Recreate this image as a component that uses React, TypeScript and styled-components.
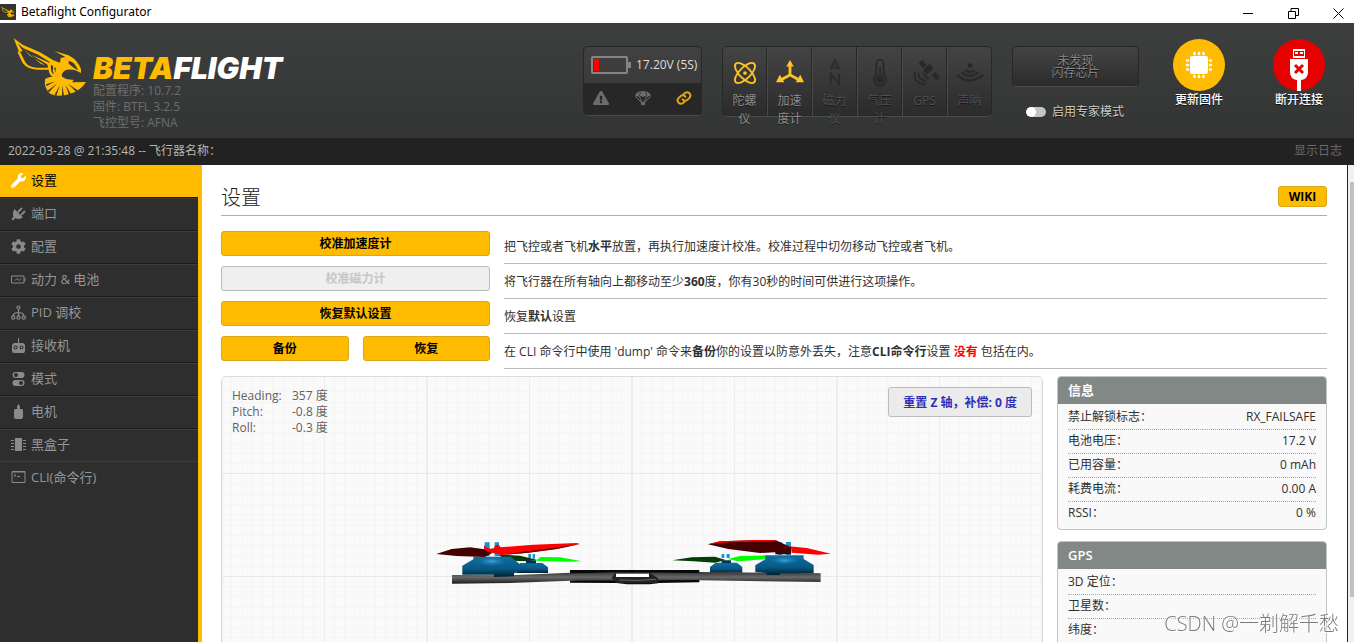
import React from "react";
import styled, { createGlobalStyle } from "styled-components";
import { FaWrench, FaCog, FaExclamationTriangle } from "react-icons/fa";

const YELLOW = "#ffbb00";
const FONT = '"Open Sans", "Noto Sans CJK SC", sans-serif';

const GlobalStyle = createGlobalStyle`
  * { box-sizing: border-box; }
  body { margin: 0; font-family: ${FONT}; font-size: 12px; color: #303030; background: #fff; }
  button, input { font-family: inherit; font-size: inherit; margin: 0; }
  h1, h2, p, dl, dd, ul { margin: 0; padding: 0; }
  svg { display: block; flex: none; }
`;

const Shell = styled.div`
  display: flex;
  flex-direction: column;
  height: 100vh;
  overflow: hidden;
`;

/* ---------- window title bar ---------- */
const TitleBar = styled.div`
  display: flex;
  align-items: center;
  flex: none;
  height: 23px;
  background: #fff;
  color: #000;
`;
const TitleText = styled.span`
  margin-left: 5px;
  font: 12px/23px "Noto Sans", "Open Sans", sans-serif;
`;
const WindowButtons = styled.div`
  display: flex;
  gap: 14px;
  margin-left: auto;
`;
const WindowButton = styled.button`
  display: flex;
  align-items: flex-end;
  justify-content: center;
  width: 31px;
  height: 23px;
  padding: 0 0 4px;
  border: 0;
  background: none;
`;

/* ---------- header ---------- */
const Header = styled.header`
  display: flex;
  flex: none;
  height: 115px;
  padding-right: 5px;
  background: linear-gradient(#3d3f3e, #333534);
`;
const Brand = styled.div`
  display: flex;
  padding: 14px 0 0 12px;
`;
const BrandText = styled.div`
  padding: 16px 0 0 6px;
`;
const BrandName = styled.div`
  font: italic 900 30px/30px Inter, sans-serif;
  color: #fff;
  white-space: nowrap;
  b { font-weight: 900; color: ${YELLOW}; }
`;
const BrandInfo = styled.div`
  line-height: 16px;
  color: #6d6f6e;
`;

const HeaderTools = styled.div`
  display: flex;
  gap: 20px;
  margin-left: auto;
  padding-top: 23px;
`;
const raised = `
  border: 1px solid #272727;
  border-bottom-color: #4a4c4b;
  border-radius: 5px;
  background: linear-gradient(#434443, #2b2b2b);
`;
const BatteryBox = styled.div`
  ${raised}
  width: 119px;
  height: 70px;
  background: linear-gradient(#404140, #343434);
  overflow: hidden;
`;
const BatteryTop = styled.div`
  display: flex;
  align-items: center;
  gap: 5px;
  height: 36px;
  padding-left: 7px;
  color: #ddd;
  line-height: 16px;
  white-space: nowrap;
`;
const BatteryBottom = styled.div`
  display: flex;
  align-items: center;
  justify-content: space-between;
  height: 32px;
  padding: 0 9px 2px;
  background: #272727;
  color: #6c6c6c;
`;
const Sensors = styled.ul`
  ${raised}
  display: flex;
  width: 270px;
  height: 71px;
  list-style: none;
`;
const Sensor = styled.li<{ $on?: boolean }>`
  flex: 1;
  padding: 12px 5px 0;
  border-right: 1px solid #272727;
  border-left: 1px solid #4a4a4a;
  color: ${(p) => (p.$on ? "#ffc425" : "#292929")};
  &:first-child { border-left: 0; }
  &:last-child { border-right: 0; }
  svg { margin: 0 auto; }
`;
const SensorLabel = styled.div<{ $on?: boolean }>`
  width: 32px;
  margin: 5px auto 0;
  text-align: center;
  line-height: 18px;
  color: ${(p) => (p.$on ? "#8e8e8e" : "#4f4f4f")};
  text-shadow: 0 1px #161616;
`;
const FlashColumn = styled.div`
  width: 127px;
`;
const FlashBox = styled.div`
  ${raised}
  height: 41px;
  padding-top: 8px;
  text-align: center;
  line-height: 12px;
  color: #858585;
  text-shadow: 0 1px #111;
`;
const ExpertToggle = styled.label`
  display: flex;
  align-items: center;
  gap: 6px;
  margin: 16px 0 0 14px;
  line-height: 18px;
  color: #ccc;
  text-shadow: 0 1px #111;
  white-space: nowrap;
`;
const Switch = styled.input`
  appearance: none;
  width: 20px;
  height: 10px;
  border-radius: 5px;
  background: radial-gradient(circle at 5px 5px, #fff 5px, #c4c4c4 5px);
`;
const Actions = styled.div`
  display: flex;
  margin: -7px 0 0 -10px;
`;
const Action = styled.button`
  display: flex;
  flex-direction: column;
  align-items: center;
  justify-content: flex-start;
  width: 100px;
  padding: 0;
  border: 0;
  background: none;
  color: #fff;
  line-height: 18px;
  text-shadow: 0 1px #111;
  font-weight: 500;
`;

/* ---------- status bar ---------- */
const StatusBar = styled.div`
  display: flex;
  justify-content: space-between;
  align-items: flex-start;
  flex: none;
  height: 27px;
  padding: 0 12px 0 8px;
  background: #222;
  color: #b5b5b5;
  line-height: 25px;
`;
const LogButton = styled.button`
  padding: 0;
  border: 0;
  background: none;
  color: #686868;
  line-height: 25px;
`;

/* ---------- body ---------- */
const Body = styled.div`
  display: flex;
  flex: 1;
  min-height: 0;
`;
const Nav = styled.nav`
  flex: none;
  width: 202px;
  border-right: 4px solid ${YELLOW};
  background: #2e2e2e;
`;
const NavItem = styled.a<{ $active?: boolean }>`
  display: flex;
  align-items: center;
  gap: 5px;
  height: 33px;
  padding: 0 0 2px 11px;
  border-top: 1px solid #1c1c1c;
  box-shadow: inset 0 1px #3d3d3d;
  color: #969696;
  font-size: 13px;
  line-height: 18px;
  text-decoration: none;
  svg { color: #8a8a8a; }
  &:last-child {
    height: 32px;
    border-top-color: #3d3d3d;
    box-shadow: none;
  }
  ${(p) =>
    p.$active &&
    `
    height: 32px;
    margin-right: -4px;
    padding-bottom: 3px;
    border-color: ${YELLOW};
    box-shadow: none;
    background: ${YELLOW};
    color: #000;
    svg { color: #fff; }
  `}
`;
const Main = styled.main`
  flex: 1;
  min-width: 0;
  padding: 0 20px 0 19px;
  overflow: hidden;
`;
const ScrollBar = styled.div`
  flex: none;
  width: 7px;
  padding: 17px 0 45px 2px;
  border-left: 1px solid #222;
  background: #f1f1f1;
`;
const ScrollThumb = styled.div`
  height: 100%;
  background: #c1c1c1;
`;
const PageHead = styled.div`
  display: flex;
  align-items: flex-start;
  justify-content: space-between;
  height: 51px;
  padding-top: 21px;
  border-bottom: 1px solid #e8b020;
`;
const PageTitle = styled.h1`
  color: #222;
  font-size: 20px;
  font-weight: 300;
  line-height: 24px;
`;
const Button = styled.button`
  flex: 1;
  height: 25px;
  padding: 0;
  border: 1px solid #dba718;
  border-radius: 3px;
  background: ${YELLOW};
  color: #000;
  font-weight: 700;
  line-height: 20px;
  &:disabled {
    border-color: #bbb;
    background: #efefef;
    color: #c6c6c6;
  }
`;
const WikiButton = styled(Button)`
  flex: none;
  width: 49px;
  height: 21px;
  padding-top: 1px;
  line-height: 18px;
`;
const ActionRows = styled.div`
  padding-top: 13px;
`;
const ActionRow = styled.div`
  display: flex;
  gap: 14px;
  height: 35px;
`;
const ActionButtons = styled.div`
  display: flex;
  flex: none;
  gap: 14px;
  width: 269px;
  padding-top: 2px;
`;
const ActionText = styled.p`
  flex: 1;
  padding-top: 2px;
  border-bottom: 1px solid #bbb;
  line-height: 32px;
  white-space: nowrap;
  b { font-weight: 700; }
`;
const Warn = styled.b`
  color: #f00;
`;
const Columns = styled.div`
  display: flex;
  gap: 14px;
  margin-top: 7px;
`;
const ModelPanel = styled.section`
  position: relative;
  display: flex;
  justify-content: space-between;
  align-items: flex-start;
  flex: 1;
  height: 420px;
  padding: 10px;
  border: 1px solid #ddd;
  border-radius: 5px;
  background: #fafafa;
  overflow: hidden;
`;
const Scene = styled.svg`
  position: absolute;
  inset: 0;
  width: 100%;
  height: 100%;
`;
const Attitude = styled.dl`
  position: relative;
  display: grid;
  grid-template-columns: 60px auto;
  padding-top: 1px;
  line-height: 16px;
  color: #616161;
`;
const ResetButton = styled.button`
  position: relative;
  height: 30px;
  padding: 0 14px;
  border: 1px solid #bbb;
  border-radius: 3px;
  background: #ebebeb;
  color: #2f2fbb;
  font-weight: 700;
`;
const SideColumn = styled.div`
  display: flex;
  flex: none;
  flex-direction: column;
  gap: 11px;
  width: 270px;
`;
const Panel = styled.section`
  border: 1px solid #c4c4c4;
  border-radius: 4px;
  background: #f9f9f9;
  overflow: hidden;
`;
const PanelTitle = styled.h2`
  height: 27px;
  padding-left: 10px;
  background: #828885;
  color: #fff;
  font-size: 13px;
  font-weight: 600;
  line-height: 27px;
`;
const PanelTable = styled.table`
  width: calc(100% - 20px);
  margin: 1px 10px 4px;
  border-collapse: collapse;
  line-height: 21px;
  tr { height: 24px; border-bottom: 1px dotted #aaa; }
  tr:last-child { border-bottom: 0; }
  th, td { padding: 0 0 1px; font-weight: 400; text-align: left; }
  td { text-align: right; }
`;
const Watermark = styled.div`
  position: fixed;
  right: 15px;
  bottom: 3px;
  color: rgba(110, 110, 110, 0.9);
  font-size: 20px;
  font-weight: 300;
  line-height: 30px;
  text-shadow: 0 0 2px #fff, 1px 1px #fff;
  white-space: nowrap;
`;

/* ---------- drawings ---------- */
const Bee = ({ width, height }: { width: number; height: number }) => (
  <svg width={width} height={height} viewBox="36 110 225 183" fill={YELLOW}>
    <path d="M41 114 L68 133 L120 156 L160 180 L180 187 L182 173 L196 170 L163 152 L205 165 Q232 177 243 207 L243 218 L225 209 Q206 205 196 210 Q183 218 186 229 Q202 241 222 238 L216 246 L258 245 Q243 270 211 280 Q178 292 151 281 Q131 264 135 237 Q143 229 158 229 Q146 222 146 208 L112 208 Q82 207 68 188 L52 154 L57 154 Z" />
    <path
      d="M53 129 L70 144 L116 164 L148 184 L150 188 L94 163 L141 192 Q146 197 143 202 L112 202 Q87 202 76 186 L60 154 L68 152 Z M206 182 Q220 184 226 195 L235 210 L222 203 L206 190 Z M153 193 Q164 198 158 210 L162 222 Q150 216 153 193 Z M163 202 L168 202 L166 218 Z"
      fill="#393b3a"
    />
    <path
      d="M138 252 L166 243 L140 257 Z M143 271 L172 249 L147 276 Z M163 285 L180 254 L169 286 Z M186 287 L187 255 L192 286 Z M207 283 L196 253 L213 281 Z M228 274 L204 250 L233 270 Z"
      fill="#393b3a"
    />
    <path d="M70 147 L122 190 L136 195 L90 166 Z" fill={YELLOW} />
  </svg>
);

const BatteryIcon = () => (
  <svg width="40" height="18" fill="none">
    <rect x="1" y="1" width="35" height="16" rx="1" stroke="#858585" strokeWidth="2" />
    <rect x="37" y="6" width="3" height="6" fill="#858585" />
    <rect x="3" y="3" width="5" height="12" fill="#f00" />
  </svg>
);
const Parachute = () => (
  <svg width="16" height="16" viewBox="0 0 16 16" fill="currentColor">
    <path d="M0 7 Q0 1.500 8 1 Q16 1.500 16 7 L14 6 L12 7 L10 6 L8 7 L6 6 L4 7 L2 6 Z" />
    <path d="M1 7 L7 13 M4.500 7 L7.500 13 M11.500 7 L8.500 13 M15 7 L9 13" fill="none" stroke="currentColor" />
    <path d="M6 12 H10 V15 H6 Z" />
    <path d="M4.500 6 Q4.500 3.500 6 2 M11.500 6 Q11.500 3.500 10 2" fill="none" stroke="#272727" strokeWidth=".8" />
  </svg>
);
const LinkIcon = () => (
  <svg width="16" height="16" viewBox="0 0 24 24" fill="none" stroke="#e0a50f" strokeWidth="3" strokeLinecap="round">
    <path d="M10 14a5 5 0 0 0 7.500.500l3-3a5 5 0 0 0-7-7l-2 1.700" />
    <path d="M14 10a5 5 0 0 0-7.500-.500l-3 3a5 5 0 0 0 7 7l2-1.700" />
  </svg>
);

const sensorArt: Record<string, React.ReactNode> = {
  gyro: (
    <g fill="none" stroke="currentColor" strokeWidth="2">
      <ellipse cx="15" cy="15" rx="14" ry="6" transform="rotate(45 15 15)" />
      <ellipse cx="15" cy="15" rx="14" ry="6" transform="rotate(-45 15 15)" />
      <circle cx="15" cy="15" r="2" fill="currentColor" stroke="none" />
    </g>
  ),
  accel: (
    <g fill="currentColor">
      <path d="M15 6 V17 L6 22 M15 17 L24 22" fill="none" stroke="currentColor" strokeWidth="3" />
      <path d="M15 1 L19 8 H11 Z M0 25 L4 17 L9 25 Z M30 25 L26 17 L21 25 Z" />
    </g>
  ),
  mag: (
    <g fill="#333" stroke="#2b2b2b">
      <path d="M15 0 L20 10 H10 Z" />
      <path d="M10.500 27 V16 L19.500 27 V16" fill="none" strokeWidth="2" />
    </g>
  ),
  baro: (
    <g fill="none" stroke="currentColor" strokeWidth="2">
      <path d="M11 17 V5 a4 4 0 0 1 8 0 V17 a6.500 6.500 0 1 1 -8 0 Z" />
      <path d="M15 8 V20" />
      <circle cx="15" cy="22" r="3.500" fill="currentColor" />
    </g>
  ),
  gps: (
    <g fill="currentColor">
      <path d="M8 4 L12 1 L17 7 L13 10 Z M22 17 L26 14 L31 20 L27 23 Z M13 12 L20 5 L24 10 L17 17 Z" />
      <path d="M12 14 L20 21 Q14 22 12 14 Z" />
      <path d="M8 15 Q8 23 16 23 M4 14 Q3 27 16 27" fill="none" stroke="currentColor" strokeWidth="2" />
    </g>
  ),
  sonar: (
    <g fill="none" stroke="currentColor" strokeWidth="2.500">
      <circle cx="15" cy="7" r="2.500" fill="currentColor" stroke="none" />
      <path d="M10 12 Q15 16 20 12 M6 14 Q15 22 24 14 M1 17 Q15 29 29 17" />
    </g>
  ),
};
const sensors = [
  { id: "gyro", label: "陀螺仪", on: true },
  { id: "accel", label: "加速度计", on: true },
  { id: "mag", label: "磁力仪" },
  { id: "baro", label: "气压计" },
  { id: "gps", label: "GPS" },
  { id: "sonar", label: "声呐" },
];

const FirmwareIcon = () => (
  <svg width="52" height="52">
    <circle cx="26" cy="26" r="26" fill={YELLOW} />
    <rect x="17" y="17" width="18" height="18" rx="2" fill="#fff" />
    <path
      d="M21.500 14 v1 M26 14 v1 M30.500 14 v1 M21.500 37 v1 M26 37 v1 M30.500 37 v1 M14 21.500 h1 M14 26 h1 M14 30.500 h1 M37 21.500 h1 M37 26 h1 M37 30.500 h1"
      stroke="#fff"
      strokeWidth="2.500"
      strokeLinecap="round"
    />
  </svg>
);
const DisconnectIcon = () => (
  <svg width="52" height="52">
    <circle cx="26" cy="26" r="26" fill="#e60000" />
    <path d="M20 10 H32 V19 H20 Z M17 20 H35 V33 Q35 40 28 41 V52 H24 V41 Q17 40 17 33 Z" fill="#fff" />
    <path d="M21 12 H31 V17 H21 Z" fill="#e60000" />
    <path d="M22 13 H25 V15 H22 Z M27 13 H30 V15 H27 Z" fill="#fff" />
    <path d="M22 26 L30 34 M30 26 L22 34" stroke="#e60000" strokeWidth="3" />
  </svg>
);

const Glyph = ({ children }: { children: React.ReactNode }) => (
  <svg width="15" height="15" viewBox="0 0 15 15" fill="currentColor">
    {children}
  </svg>
);
const navItems = [
  { label: "设置", icon: <FaWrench size={15} />, active: true },
  {
    label: "端口",
    icon: (
      <Glyph>
        <path d="M3.500 3 L12 11.500 Q8 14 4.500 12 L2 14.500 L.5 13 L2.500 11 Q1 7 3.500 3 Z" />
        <path d="M7 6 L11 2 M10 9 L14 5" stroke="currentColor" strokeWidth="1.800" />
      </Glyph>
    ),
  },
  { label: "配置", icon: <FaCog size={15} /> },
  {
    label: "动力 & 电池",
    icon: (
      <Glyph>
        <path d="M.5 4 H13 V11 H.5 Z M14 6 V9 M4 8.500 L6 6.500 L8 8.500 L10 6.500" fill="none" stroke="currentColor" />
      </Glyph>
    ),
  },
  {
    label: "PID 调校",
    icon: (
      <Glyph>
        <g fill="none" stroke="currentColor" strokeWidth="1.200">
          <circle cx="7.500" cy="2.500" r="1.500" />
          <circle cx="2.200" cy="12.500" r="1.600" />
          <circle cx="7.500" cy="12.500" r="1.600" />
          <circle cx="12.800" cy="12.500" r="1.600" />
          <path d="M7.500 4 V11 M2.200 11 Q2.200 7.500 7.500 7.500 Q12.800 7.500 12.800 11" />
        </g>
      </Glyph>
    ),
  },
  {
    label: "接收机",
    icon: (
      <Glyph>
        <path
          fillRule="evenodd"
          d="M7 0 H8 V5 H12 L14 7 V13 Q14 15 12 15 H3 Q1 15 1 13 V7 L3 5 H7 Z M4.500 7.500 a2 2 0 1 0 .01 0 Z M10.500 7.500 a2 2 0 1 0 .01 0 Z"
        />
        <circle cx="4.500" cy="9.500" r="1" />
        <circle cx="10.500" cy="9.500" r="1" />
      </Glyph>
    ),
  },
  {
    label: "模式",
    icon: (
      <Glyph>
        <rect x="1.500" y="1" width="12" height="6" rx="3" />
        <rect x="1.500" y="9" width="12" height="6" rx="3" />
        <circle cx="5" cy="4" r="2" fill="#2e2e2e" />
        <circle cx="10" cy="12" r="2" fill="#2e2e2e" />
      </Glyph>
    ),
  },
  {
    label: "电机",
    icon: (
      <Glyph>
        <path d="M7.500 0 Q10 3 8.500 5 H11 Q12 5 12 7 V13 Q12 15 10 15 H5 Q3 15 3 13 V7 Q3 5 4 5 H6.500 Q5 3 7.500 0 Z" />
      </Glyph>
    ),
  },
  {
    label: "黑盒子",
    icon: (
      <Glyph>
        <path d="M4 1 H11 V14 H4 Z M0 3 H3 V4 H0 Z M0 6 H3 V7 H0 Z M0 9 H3 V10 H0 Z M0 12 H3 V13 H0 Z M12 3 H15 V4 H12 Z M12 6 H15 V7 H12 Z M12 9 H15 V10 H12 Z M12 12 H15 V13 H12 Z" />
      </Glyph>
    ),
  },
  {
    label: "CLI(命令行)",
    icon: (
      <Glyph>
        <path d="M1 2.500 H14 V13.500 H1 Z M1 3 H14 M3 5.500 L5 6.500 L3 7.500 M6 7.500 H9" fill="none" stroke="currentColor" />
      </Glyph>
    ),
  },
];

/* Graph-paper lines: a minor line every tenth of a major cell. */
const CELL = 102.5;
const GridLines = () => (
  <g shapeRendering="crispEdges">
    {Array.from({ length: 240 }, (_, i) => {
      const x = Math.round((i * CELL) / 10) - 1;
      return (
        <rect key={`v${i}`} x={x} y="0" width={i % 20 === 0 ? 2 : 1} height="100%" fill={i % 10 === 0 ? "#ececec" : "#f5f5f5"} />
      );
    })}
    {Array.from({ length: 44 }, (_, i) => {
      const y = Math.round(((i - 1) * CELL) / 10) + 4;
      return <rect key={`h${i}`} x="0" y={y} width="100%" height="1" fill={i % 10 === 0 && i > 0 ? "#e9e9e9" : "#f5f5f5"} />;
    })}
  </g>
);

const Quadcopter = () => (
  <g transform="scale(0.3333)">
    <defs>
      <linearGradient id="arm" x1="0" y1="0" x2="0" y2="1">
        <stop offset="0" stopColor="#333" />
        <stop offset="0.450" stopColor="#6a6a6a" />
        <stop offset="1" stopColor="#1c1c1c" />
      </linearGradient>
      <linearGradient id="motor" x1="0" y1="0" x2="0" y2="1">
        <stop offset="0" stopColor="#0f6da3" />
        <stop offset="0.600" stopColor="#075985" />
        <stop offset="1" stopColor="#02202f" />
      </linearGradient>
      <radialGradient id="shine">
        <stop offset="0" stopColor="#3aa5e0" />
        <stop offset="1" stopColor="#0f6da3" stopOpacity="0" />
      </radialGradient>
    </defs>
    <g>
      <path d="M325 102 h8 v14 h-8 Z M338 102 h7 v14 h-7 Z M905 102 h8 v12 h-8 Z M920 102 h9 v12 h-9 Z" fill="#1593d2" />
      <path d="M232 103 L300 107 L350 119 L325 124 L262 122 Z" fill="#053d05" />
      <path d="M346 122 L362 111 L420 112 L486 124 L440 125 Z" fill="#0f0" />
      <path d="M757 121 L815 112 L885 110 L917 120 L885 128 L820 124 Z" fill="#053d05" />
      <path d="M923 117 L960 108 L1040 106 L1040 117 L955 124 Z" fill="#0f0" />
      <path d="M301 129 H367 L384 142 V159 H290 V142 Z M887 128 H951 L967 141 V158 H870 V141 Z" fill="url(#motor)" />
      <path d="M318 121 h30 v9 h-30 Z M905 121 h28 v8 h-28 Z" fill="#00374d" />
    </g>
    <path d="M96 165 L270 166 L451 158 L838 156 L1202 160 V186 L838 181 L660 190 L451 182 L270 189 L96 191 Z" fill="url(#arm)" />
    <path d="M450 150 H838 V159 L715 158 H570 L450 160 Z M450 182 L838 180 V187 L715 189 L690 193 H620 L595 189 L450 188 Z" fill="#080808" />
    <path d="M585 159 H690 L714 174 V190 H592 L575 174 Z" fill="#222" />
    <rect x="588" y="161" width="99" height="10" fill="#fff" />
    <path d="M598 180 Q650 184 708 178" stroke="#666" strokeWidth="3" fill="none" />
    <path d="M160 110 H272 L303 135 V154 L282 160 V169 L222 171 V164 H127 V137 L160 118 Z" fill="url(#motor)" />
    <path d="M1036 106 H1151 V117 L1181 135 V160 H1080 V165 H1040 V159 L1006 157 V136 L1036 118 Z" fill="url(#motor)" />
    <ellipse cx="215" cy="124" rx="48" ry="15" fill="url(#shine)" />
    <ellipse cx="1094" cy="121" rx="48" ry="14" fill="url(#shine)" />
    <path d="M194 67 h15 v42 h-15 Z M224 67 h13 v42 h-13 Z M1098 66 h15 v40 h-15 Z M1072 66 h14 v40 h-14 Z" fill="#1593d2" />
    <path d="M49 102 L95 87 L150 82 L194 88 L218 98 L194 111 L110 108 Z" fill="#450000" />
    <path d="M192 76 Q206 91 222 84 Q224 74 236 74 L242 82 L340 74 L470 69 L480 72 L410 87 L325 98 L244 105 L205 96 L192 88 Z" fill="#f00" />
    <path d="M480 72 L410 87 L325 98 L244 105 L320 94 L400 84 Z" fill="#600" />
    <path d="M864 73 L900 64 L1020 60 L1068 61 L1113 82 V103 H1066 V97 L1020 99 L925 87 Z" fill="#450000" />
    <path d="M864 73 L900 64 L1020 60 L1068 61 L1068 64 L930 67 Z" fill="#f00" />
    <path d="M1100 78 L1160 84 L1233 101 L1195 104 L1115 98 L1113 82 Z" fill="#f00" />
  </g>
);

const infoRows = [
  ["禁止解锁标志：", "RX_FAILSAFE"],
  ["电池电压：", "17.2 V"],
  ["已用容量：", "0 mAh"],
  ["耗费电流：", "0.00 A"],
  ["RSSI：", "0 %"],
];
const gpsRows = [
  ["3D 定位：", ""],
  ["卫星数：", ""],
  ["纬度：", ""],
];

const InfoPanel = ({ title, rows }: { title: string; rows: string[][] }) => (
  <Panel>
    <PanelTitle>{title}</PanelTitle>
    <PanelTable>
      <tbody>
        {rows.map(([name, value]) => (
          <tr key={name}>
            <th scope="row">{name}</th>
            <td>{value}</td>
          </tr>
        ))}
      </tbody>
    </PanelTable>
  </Panel>
);

export default function App() {
  return (
    <Shell>
      <GlobalStyle />
      <TitleBar>
        <svg width="16" height="16" viewBox="0 0 16 16">
          <rect width="16" height="16" fill="#333" />
          <svg x="1" y="2" width="14" height="12">
            <Bee width={14} height={12} />
          </svg>
        </svg>
        <TitleText>Betaflight Configurator</TitleText>
        <WindowButtons>
          <WindowButton aria-label="最小化">
            <svg width="11" height="11" stroke="#000"><path d="M0 5.500 H10" /></svg>
          </WindowButton>
          <WindowButton aria-label="还原">
            <svg width="11" height="11" fill="none" stroke="#000"><path d="M.5 3.500 H7.500 V10.500 H.5 Z M3 3 V.5 H10.500 V7.500 H8" /></svg>
          </WindowButton>
          <WindowButton aria-label="关闭">
            <svg width="11" height="11" stroke="#000"><path d="M.5 .5 L10.500 10.500 M10.500 .5 L.5 10.500" /></svg>
          </WindowButton>
        </WindowButtons>
      </TitleBar>

      <Header>
        <Brand>
          <Bee width={75} height={61} />
          <BrandText>
            <BrandName><b>BETA</b>FLIGHT</BrandName>
            <BrandInfo>
              <div>配置程序: 10.7.2</div>
              <div>固件: BTFL 3.2.5</div>
              <div>飞控型号: AFNA</div>
            </BrandInfo>
          </BrandText>
        </Brand>
        <HeaderTools>
          <BatteryBox>
            <BatteryTop>
              <BatteryIcon />
              <span>17.20V (5S)</span>
            </BatteryTop>
            <BatteryBottom>
              <FaExclamationTriangle size={16} />
              <Parachute />
              <LinkIcon />
            </BatteryBottom>
          </BatteryBox>
          <Sensors>
            {sensors.map((s) => (
              <Sensor key={s.id} $on={s.on}>
                <svg width="28" height="28" viewBox="0 0 30 30">{sensorArt[s.id]}</svg>
                <SensorLabel $on={s.on}>{s.label}</SensorLabel>
              </Sensor>
            ))}
          </Sensors>
          <FlashColumn>
            <FlashBox>未发现<br />闪存芯片</FlashBox>
            <ExpertToggle>
              <Switch type="checkbox" />
              启用专家模式
            </ExpertToggle>
          </FlashColumn>
          <Actions>
            <Action><FirmwareIcon />更新固件</Action>
            <Action><DisconnectIcon />断开连接</Action>
          </Actions>
        </HeaderTools>
      </Header>

      <StatusBar>
        <span>2022-03-28 @ 21:35:48 -- 飞行器名称：</span>
        <LogButton>显示日志</LogButton>
      </StatusBar>

      <Body>
        <Nav>
          {navItems.map((n) => (
            <NavItem key={n.label} href="#" $active={n.active}>
              {n.icon}
              {n.label}
            </NavItem>
          ))}
        </Nav>
        <Main>
          <PageHead>
            <PageTitle>设置</PageTitle>
            <WikiButton>WIKI</WikiButton>
          </PageHead>
          <ActionRows>
            <ActionRow>
              <ActionButtons><Button>校准加速度计</Button></ActionButtons>
              <ActionText>把飞控或者飞机<b>水平</b>放置，再执行加速度计校准。校准过程中切勿移动飞控或者飞机。</ActionText>
            </ActionRow>
            <ActionRow>
              <ActionButtons><Button disabled>校准磁力计</Button></ActionButtons>
              <ActionText>将飞行器在所有轴向上都移动至少<b>360</b>度，你有30秒的时间可供进行这项操作。</ActionText>
            </ActionRow>
            <ActionRow>
              <ActionButtons><Button>恢复默认设置</Button></ActionButtons>
              <ActionText>恢复<b>默认</b>设置</ActionText>
            </ActionRow>
            <ActionRow>
              <ActionButtons><Button>备份</Button><Button>恢复</Button></ActionButtons>
              <ActionText>在 CLI 命令行中使用 'dump' 命令来<b>备份</b>你的设置以防意外丢失，注意<b>CLI命令行</b>设置 <Warn>没有</Warn> 包括在内。</ActionText>
            </ActionRow>
          </ActionRows>
          <Columns>
            <ModelPanel>
              <Scene>
                <GridLines />
                <svg x="50%" y="0" overflow="visible">
                  <g transform="translate(-212 143)"><Quadcopter /></g>
                </svg>
              </Scene>
              <Attitude>
                <dt>Heading:</dt><dd>357 度</dd>
                <dt>Pitch:</dt><dd>-0.8 度</dd>
                <dt>Roll:</dt><dd>-0.3 度</dd>
              </Attitude>
              <ResetButton>重置 Z 轴，补偿: 0 度</ResetButton>
            </ModelPanel>
            <SideColumn>
              <InfoPanel title="信息" rows={infoRows} />
              <InfoPanel title="GPS" rows={gpsRows} />
            </SideColumn>
          </Columns>
        </Main>
        <ScrollBar><ScrollThumb /></ScrollBar>
      </Body>
      <Watermark>CSDN @一剃解千愁</Watermark>
    </Shell>
  );
}
